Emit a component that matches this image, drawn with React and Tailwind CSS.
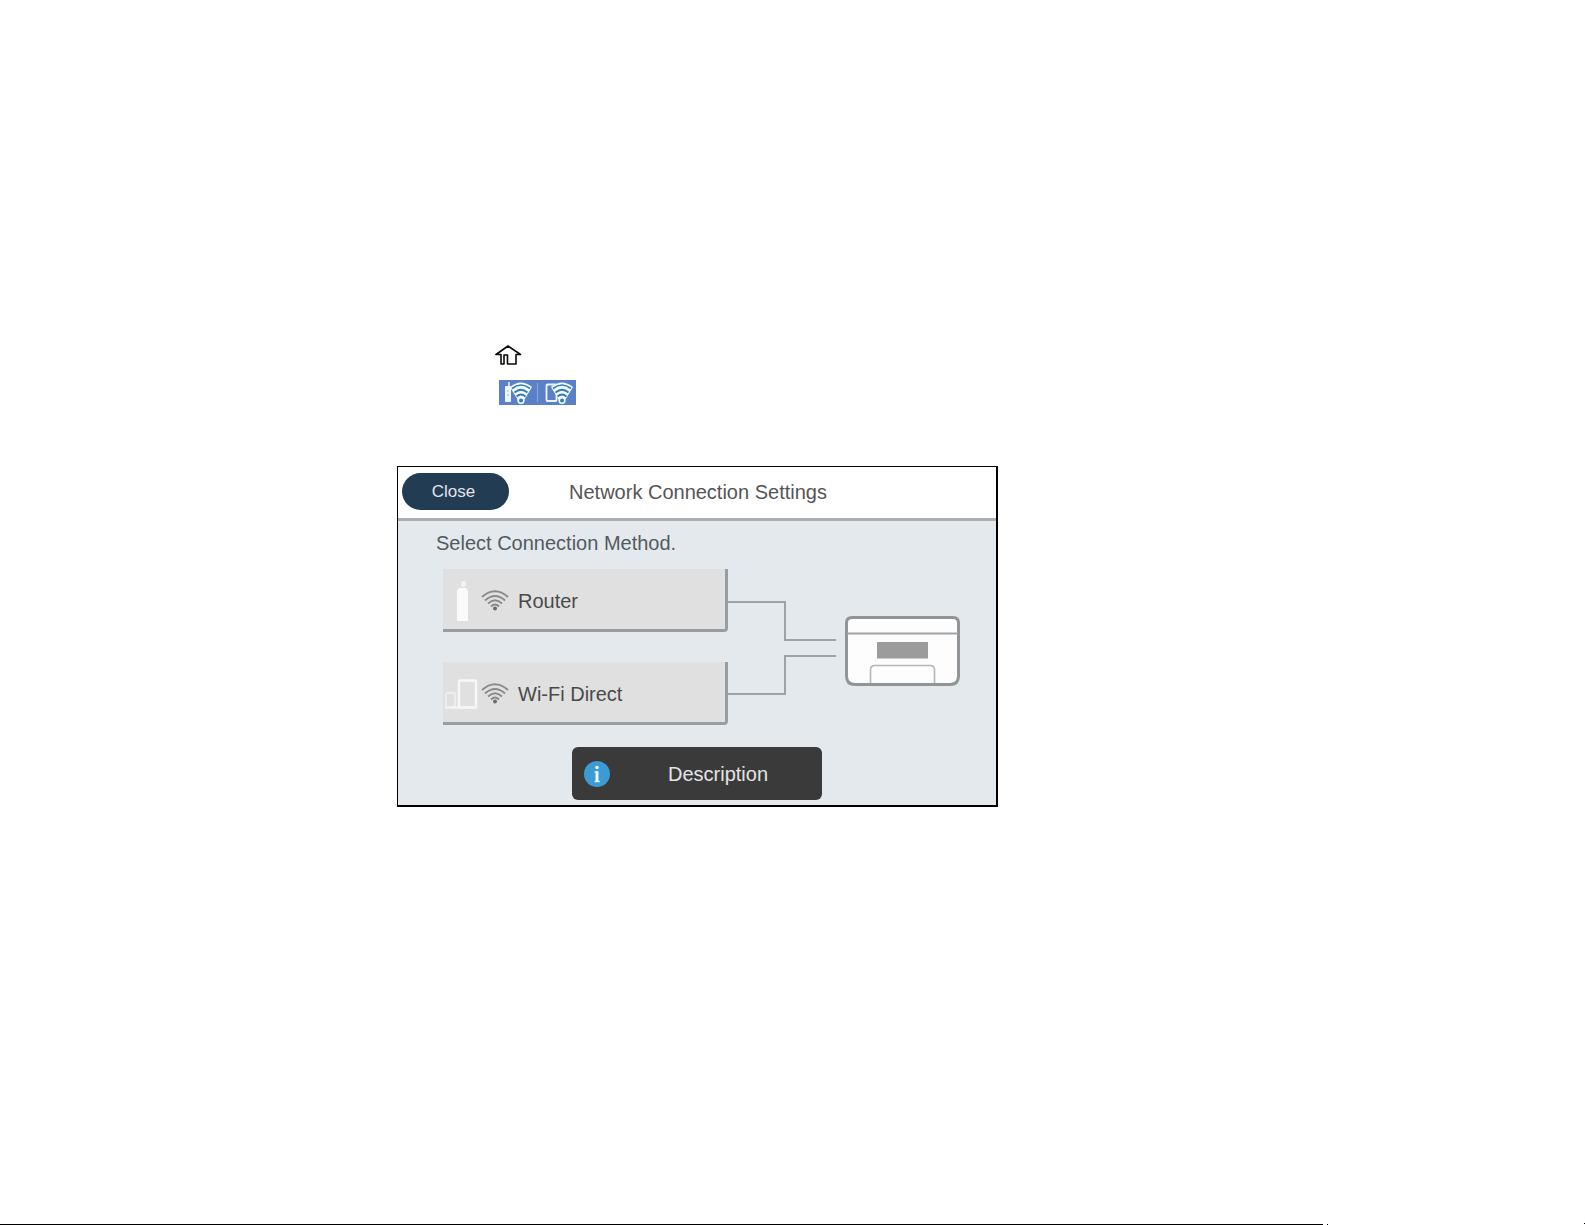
function HomeIcon() {
  return (
    <svg className="block h-5 w-[27px]" viewBox="0 0 27 20" fill="none" stroke="#0a0a0a" strokeWidth="1.6" role="img" aria-label="Home">
      <path d="M13 1 L1 9.5 H6 V19 H9 V10 H12.500 V19 H21 V9.5 H25.500 Z" strokeLinejoin="round" />
    </svg>
  );
}

function BadgeWave() {
  return (
    <g>
      <path d="M0 6 Q11 -3 22 6 L13 21 Q11 23 9 21 Z" fill="#f4fbff" />
      <g fill="none" stroke="#2f7cb0" strokeWidth="1.7">
        <path d="M2 7.500 Q11 .5 20 7.500" />
        <path d="M4.500 11.500 Q11 6 17.500 11.500" />
        <path d="M6.500 15.500 Q11 11.500 15.500 15.500" />
      </g>
      <circle cx="11" cy="19.500" r="3.600" fill="#f4fbff" />
      <circle cx="11" cy="19.500" r="2" fill="#2f7cb0" />
    </g>
  );
}

function NetworkBadge() {
  return (
    <svg className="block h-[25px] w-[77px]" viewBox="0 0 77 25" role="img" aria-label="Network connection">
      <rect width="77" height="25" fill="#5a80c8" />
      <path d="M10 2 V7" stroke="#e6f0fb" strokeWidth="1.6" />
      <rect x="6" y="6" width="6" height="16" rx="1" fill="#eef5fd" />
      <path d="M8 11 H10 M8 15 H10" stroke="#9dbbe4" strokeWidth="1" />
      <g transform="translate(11 1)">
        <BadgeWave />
      </g>
      <path d="M38.5 3 V22" stroke="#86a5d9" strokeWidth="1.2" />
      <rect x="47.500" y="4.500" width="10" height="16.500" rx="1" fill="#5a80c8" stroke="#eef5fd" strokeWidth="1.8" />
      <g transform="translate(52 1)">
        <BadgeWave />
      </g>
    </svg>
  );
}

function WifiIcon() {
  return (
    <svg className="block h-[21px] w-7 shrink-0" viewBox="0 0 28 21" fill="none" stroke="#8a8a8a" strokeWidth="1.9" aria-hidden="true">
      <path d="M1 7 Q14 -4.500 27 7" />
      <path d="M4 10.500 Q14 1.500 24 10.500" />
      <path d="M7 13.500 Q14 7 21 13.500" />
      <path d="M10 16.500 Q14 12.500 18 16.500" />
      <circle cx="14" cy="18.500" r="2" fill="#6c6c6c" stroke="none" />
    </svg>
  );
}

function RouterIcon() {
  return (
    <svg className="block h-[42px] w-[35px] shrink-0" viewBox="0 0 35 42" fill="#fafafa" aria-hidden="true">
      <rect x="18" y="1" width="5" height="6" rx="2" opacity=".7" />
      <path d="M16 8 H23 L25 11 V40 Q25 41 24 41 H15 Q14 41 14 40 V11 Z" />
    </svg>
  );
}

function DevicesIcon() {
  return (
    <svg className="block h-[42px] w-[35px] shrink-0" viewBox="0 0 35 42" fill="none" aria-hidden="true">
      <rect x="16" y="7.500" width="17" height="27" rx="1" stroke="#f7f7f7" strokeWidth="2.400" />
      <rect x="3" y="20" width="9" height="14.500" rx="1" stroke="#ededed" strokeWidth="2" />
      <path d="M2 34.500 H34" stroke="#f4f4f4" strokeWidth="2.400" />
    </svg>
  );
}

function MethodButton({ icon, label }) {
  return (
    <button
      type="button"
      className="flex h-[63px] w-full items-center rounded-br-sm border-r-[3px] border-b-[3px] border-[#979da1] bg-[#e0e0e0] pt-[3px] text-left text-xl leading-6 text-[#4a4a4a]"
    >
      {icon}
      <span className="ml-[3px]">
        <WifiIcon />
      </span>
      <span className="ml-[9px]">{label}</span>
    </button>
  );
}

function Connectors() {
  return (
    <svg className="block h-[156px] w-[108px] shrink-0" viewBox="0 0 108 156" fill="none" stroke="#9ca2a6" strokeWidth="2" aria-hidden="true">
      <path d="M0 33 H57 V71 H108" />
      <path d="M0 125 H57 V87 H108" />
    </svg>
  );
}

function Printer() {
  return (
    <svg className="mt-2 ml-[9px] block h-[70px] w-[115px] shrink-0" viewBox="0 0 115 70" fill="none" role="img" aria-label="Printer">
      <path
        d="M7 1.500 H108 Q113.500 1.500 113.500 7 V60 Q113.500 68.500 105 68.500 H10 Q1.500 68.500 1.500 60 V7 Q1.500 1.500 7 1.500 Z"
        fill="#fdfdfd"
        stroke="#929597"
        strokeWidth="3"
      />
      <path d="M2 17.500 H113" stroke="#a2a4a6" strokeWidth="2" />
      <rect x="32" y="26" width="51" height="16.500" fill="#9c9c9c" />
      <path d="M25.500 67 V54 Q25.500 49.500 30 49.500 H85 Q89.500 49.500 89.500 54 V67" stroke="#b4b6b8" strokeWidth="1.600" />
    </svg>
  );
}

function InfoIcon() {
  return (
    <svg className="block h-7 w-7" viewBox="0 0 28 28" aria-hidden="true">
      <circle cx="14" cy="14" r="13" fill="#3c9bd4" />
      <circle cx="14" cy="7.500" r="1.800" fill="#e8f8ff" />
      <path d="M11.500 12 H15 M11.500 21.500 H17" fill="none" stroke="#bfe6f8" strokeWidth="1.400" />
      <rect x="12.500" y="11.500" width="3" height="10.500" fill="#e8f8ff" />
    </svg>
  );
}

export default function App() {
  return (
    <div className="flex min-h-screen flex-col bg-white font-['Liberation_Sans',Arial,sans-serif]">
      <main className="pt-[345px] pl-[397px]">
        <div className="pl-[98px]">
          <HomeIcon />
        </div>
        <div className="mt-[15px] pl-[102px]">
          <NetworkBadge />
        </div>

        <section className="mt-[61px] w-full max-w-[601px] border-t border-r-2 border-b-2 border-l border-black bg-[#e3e9ed]">
          <header className="grid grid-cols-[1fr_auto_1fr] items-center border-b-[3px] border-[#abafb2] bg-white pt-[6px] pr-[2px] pb-2 pl-1">
            <button type="button" className="h-[37px] w-[107px] rounded-full bg-[#213c53] pr-1 text-[17px] leading-5 text-[#e2e6ea]">
              Close
            </button>
            <h1 className="text-xl leading-6 text-[#555555]">Network Connection Settings</h1>
          </header>

          <div className="pt-[10px] pb-[5px]">
            <p className="pl-[38px] text-xl leading-6 text-[#555a5e]">Select Connection Method.</p>
            <div className="mt-[14px] flex items-center pr-9 pl-[45px]">
              <div className="flex flex-1 flex-col gap-[30px]">
                <MethodButton icon={<RouterIcon />} label="Router" />
                <MethodButton icon={<DevicesIcon />} label="Wi-Fi Direct" />
              </div>
              <Connectors />
              <Printer />
            </div>
            <button
              type="button"
              className="mx-auto mt-[22px] grid h-[53px] w-[250px] grid-cols-[48px_1fr] items-center rounded-md bg-[#3a3a3a] pr-[6px] text-xl leading-6 text-[#e4e4e4]"
            >
              <span className="pl-[11px]">
                <InfoIcon />
              </span>
              <span>Description</span>
            </button>
          </div>
        </section>
      </main>

      <footer className="mt-auto flex items-end" aria-hidden="true">
        <div className="h-px flex-1 bg-black" />
        <div className="ml-1 h-px w-px bg-black" />
        <div className="mb-px ml-64 h-px w-px bg-black" />
      </footer>
    </div>
  );
}
